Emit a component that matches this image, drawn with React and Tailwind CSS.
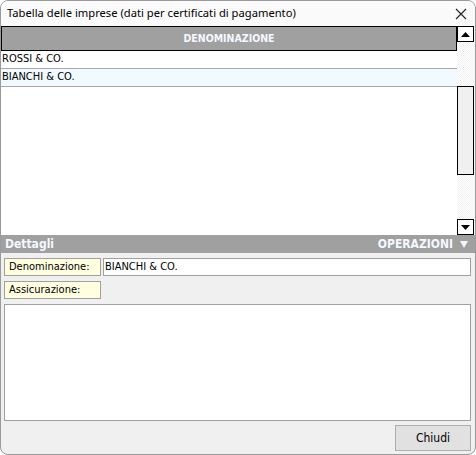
import React from "react";

const rows = ["ROSSI & CO.", "BIANCHI & CO."];

function ScrollButton({ up }) {
  return (
    <div className="w-[17px] h-[16px] bg-white border border-black flex items-center justify-center">
      <svg width="9" height="5" viewBox="0 0 9 5">
        {up ? <polygon points="0,5 9,5 4.5,0" fill="#000" /> : <polygon points="0,0 9,0 4.5,5" fill="#000" />}
      </svg>
    </div>
  );
}

export default function App() {
  const selected = 1;

  return (
    <div
      className="w-[476px] h-[455px] bg-[#f0f0f0] border border-[#9a9a9a] rounded-[8px] overflow-hidden flex flex-col text-[11px] text-black"
      style={{ fontFamily: '"DejaVu Sans Condensed", "DejaVu Sans", sans-serif' }}
    >
      {/* Title bar */}
      <div className="h-[25px] bg-[#fafafa] flex items-center justify-between pl-[6px] pr-[6px] shrink-0">
        <span className="text-[11.2px] text-black" style={{ fontFamily: '"Noto Sans", "Open Sans", sans-serif' }}>
          Tabella delle imprese (dati per certificati di pagamento)
        </span>
        <svg width="12" height="12" viewBox="0 0 12 12" className="mr-[2px]">
          <path d="M1 1 L11 11 M11 1 L1 11" stroke="#222" strokeWidth="1.1" />
        </svg>
      </div>

      {/* Grid */}
      <div className="h-[209px] flex shrink-0 bg-white">
        <div className="flex-1 flex flex-col">
          <div className="h-[25px] bg-[#a0a0a0] border border-black flex items-center justify-center">
            <span className="font-bold text-[10.5px] text-[#f4f8ff]">DENOMINAZIONE</span>
          </div>
          {rows.map((r, i) => (
            <div
              key={r}
              className={`h-[18px] flex items-center pl-[1px] border-b border-[#a8a8a8] ${i === selected ? "bg-[#f0faff]" : "bg-white"}`}
            >
              {r}
            </div>
          ))}
        </div>
        <div className="w-[18px] flex flex-col bg-[repeating-conic-gradient(#f0f0f0_0%_25%,#ffffff_0%_50%)] bg-[length:2px_2px]">
          <ScrollButton up />
          <div className="h-[44px]" />
          <div className="w-[17px] h-[89px] bg-[#f0f0f0] border border-black" />
          <div className="flex-1" />
          <ScrollButton />
        </div>
      </div>

      {/* Dettagli bar */}
      <div className="h-[18px] bg-[#a0a0a0] flex items-center justify-between pl-[4px] pr-[7px] shrink-0 font-bold text-[12px] text-[#f4f8ff]">
        <span>Dettagli</span>
        <span className="flex items-center gap-[7px]">
          OPERAZIONI
          <svg width="8" height="7" viewBox="0 0 8 7">
            <polygon points="0,0 8,0 4,7" fill="#f4f8ff" />
          </svg>
        </span>
      </div>

      {/* Form */}
      <div className="flex-1 flex flex-col px-[3px] pt-[5px] gap-[5px]">
        <div className="flex gap-[2px]">
          <div className="w-[97px] h-[18px] bg-[#ffffe0] border border-[#a0a0a0] flex items-center pl-[4px]">Denominazione:</div>
          <div className="flex-1 h-[18px] bg-white border border-[#a0a0a0] flex items-center pl-[1px] mr-[1px]">BIANCHI &amp; CO.</div>
        </div>
        <div className="flex">
          <div className="w-[97px] h-[18px] bg-[#ffffe0] border border-[#a0a0a0] flex items-center pl-[4px]">Assicurazione:</div>
        </div>
        <div className="h-[117px] bg-white border border-[#a0a0a0] mr-[1px]" />
        <div className="flex justify-end mr-[1px] -mt-[1px]">
          <button className="w-[76px] h-[26px] bg-[#e1e1e1] border border-[#adadad] text-[12px] text-black">
            Chiudi
          </button>
        </div>
      </div>
    </div>
  );
}
